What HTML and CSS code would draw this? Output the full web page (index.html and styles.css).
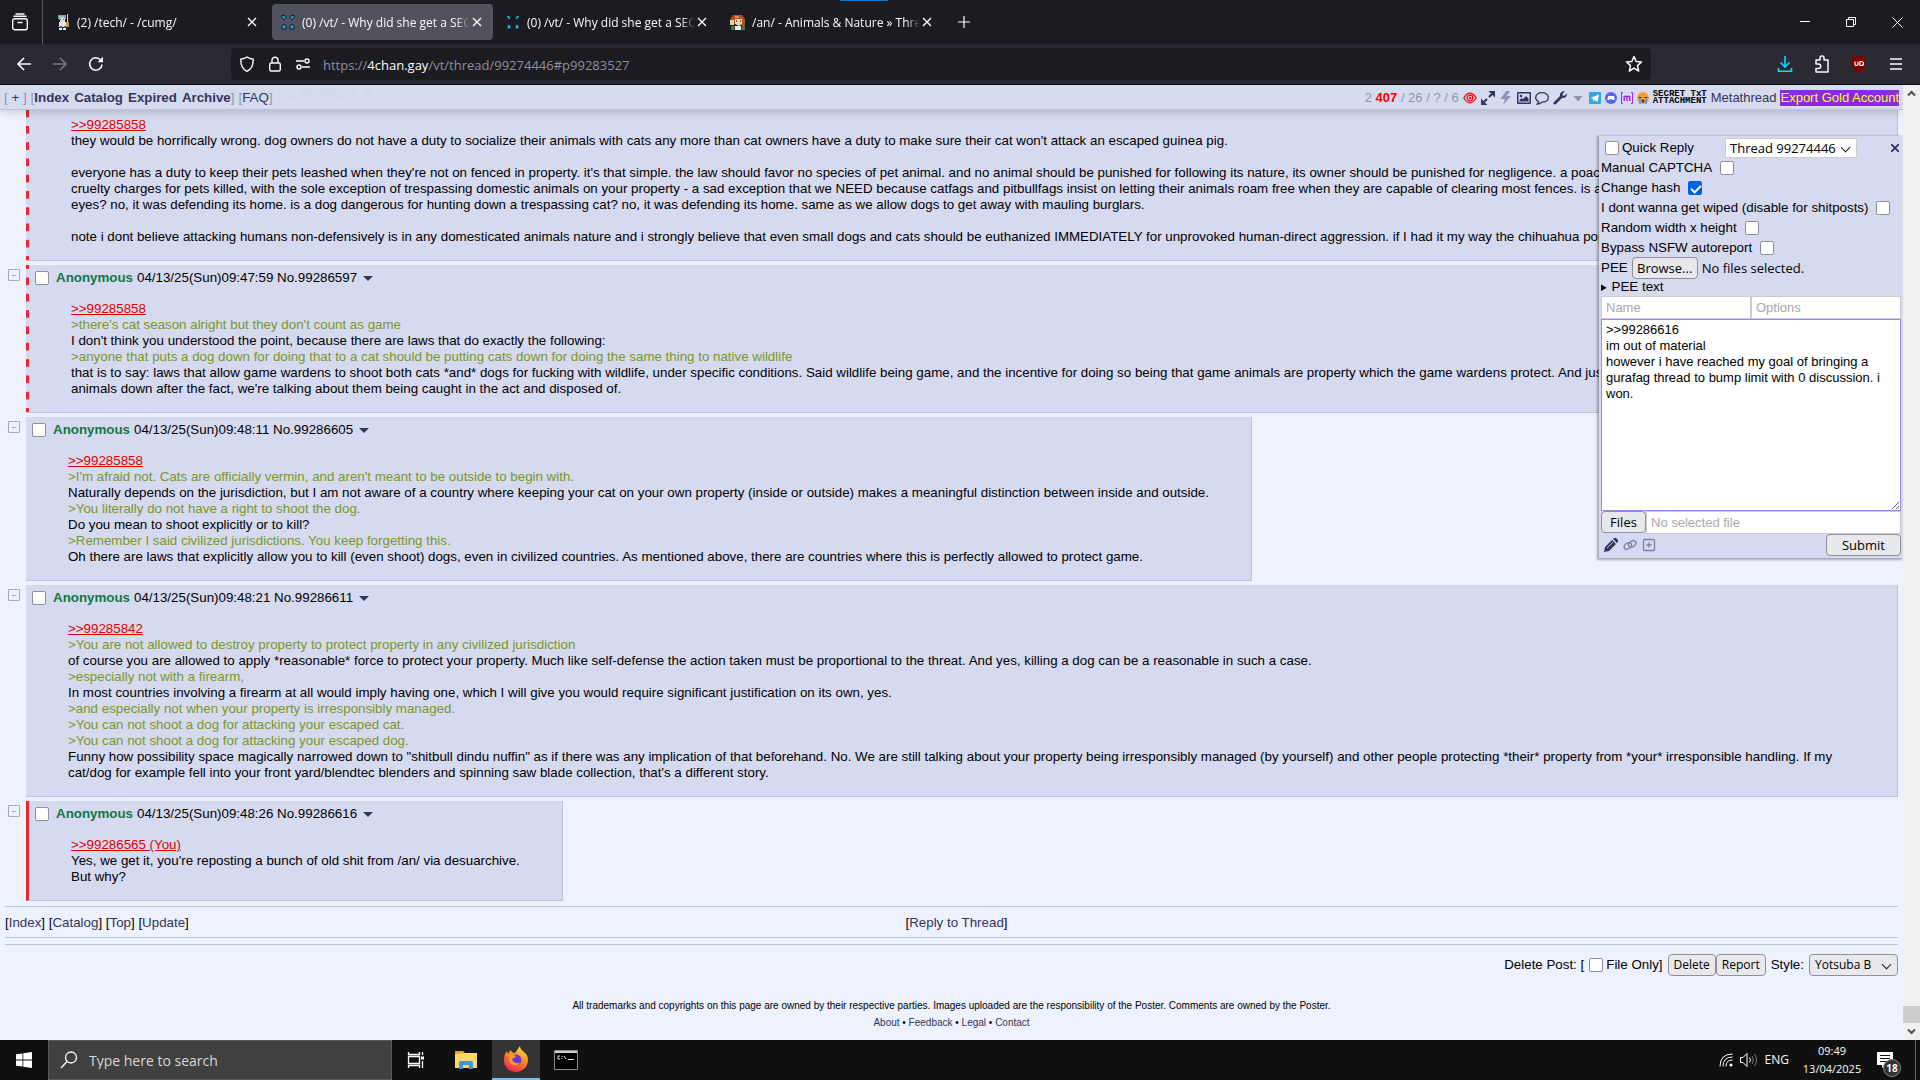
FILE: index.html
```html
<!DOCTYPE html>
<html lang="en">
<head>
    <title>/vt/ - Why did she get a SECOND</title>
    <meta charset="UTF-8">
    <link rel="stylesheet" href="styles.css">
</head>
<body>
<header class="titlebar">
    <button class="tabview" aria-label="Recent browsing">
        <svg width="18" height="18" viewBox="0 0 18 18" fill="none" stroke="#fbfbfe" stroke-width="1.4"><rect x="1.7" y="5.7" width="14.6" height="11" rx="2"/><path d="M2.5 3.2h13M4.5 1h9M6.5 9.5h5"/></svg>
    </button>
    <div class="tabs">
        <div class="tab">
            <svg width="16" height="16" viewBox="0 0 16 16"><path fill="#7f9fa8" d="M3 1h8v4H9v1H4V5H3z"/><path fill="#f2dccb" d="M5 4h5v4H5z"/><path fill="#dfe9ee" d="M4 8h7v5H4z"/><path fill="#9fc0c8" d="M4 2h5v2H4z"/><path fill="#38617e" d="M5 5h1v1H5zM8 5h1v1H8zM5 12h2v2H5zM9 12h2v2H9z"/><path fill="#eee" d="M4 14h3v2H4zM8 14h3v2H8z"/><path fill="#c9974c" d="M11 8h3v5h-3z"/><path fill="#d8d8d8" d="M12 0h1v8h-1z"/></svg>
            <span class="tab_title">(2) /tech/ - /cumg/</span>
            <button class="close" aria-label="Close tab"><svg width="10" height="10" viewBox="0 0 10 10" stroke="#fbfbfe" stroke-width="1.4"><path d="M1 1l8 8M9 1L1 9"/></svg></button>
        </div>
        <div class="tab active">
            <svg width="16" height="16" viewBox="0 0 16 16" fill="#2e9fd0" stroke="#0c1c2a" stroke-width="1"><path d="M1 2l3-1 2 3-2 2zM15 2l-3-1-2 3 2 2zM4 10l2 2v3H2v-3zM12 10l-2 2v3h4v-3z"/></svg>
            <span class="tab_title">(0) /vt/ - Why did she get a SECO</span>
            <button class="close" aria-label="Close tab"><svg width="10" height="10" viewBox="0 0 10 10" stroke="#fbfbfe" stroke-width="1.4"><path d="M1 1l8 8M9 1L1 9"/></svg></button>
        </div>
        <div class="tab">
            <svg width="16" height="16" viewBox="0 0 16 16" fill="#2e9fd0" stroke="#0c1c2a" stroke-width="1"><path d="M1 2l3-1 2 3-2 2zM15 2l-3-1-2 3 2 2zM4 10l2 2v3H2v-3zM12 10l-2 2v3h4v-3z"/></svg>
            <span class="tab_title">(0) /vt/ - Why did she get a SECO</span>
            <button class="close" aria-label="Close tab"><svg width="10" height="10" viewBox="0 0 10 10" stroke="#fbfbfe" stroke-width="1.4"><path d="M1 1l8 8M9 1L1 9"/></svg></button>
        </div>
        <div class="tab">
            <svg width="16" height="16" viewBox="0 0 16 16"><path fill="#b5522b" d="M3 1h9l3 4v6l-2 2-2-3H4l-4 1V6z"/><path fill="#f3d3ae" d="M5 5h7v5l-3 2-4-2z"/><path fill="#f0c9a0" d="M0 6h4v5H0z"/><path fill="#4a7a3c" d="M10 6h1v2h-1zM6 6h1v2H6zM1 12h4l-1 4H1zM12 12h3v4h-4z"/><path fill="#eee" d="M5 12h6v4H5z"/><path fill="#e08a55" d="M5 2h4v2H5z"/></svg>
            <span class="tab_title">/an/ - Animals &amp; Nature » Threa</span>
            <button class="close" aria-label="Close tab"><svg width="10" height="10" viewBox="0 0 10 10" stroke="#fbfbfe" stroke-width="1.4"><path d="M1 1l8 8M9 1L1 9"/></svg></button>
        </div>
        <button class="newtab" aria-label="New tab"><svg width="12" height="12" viewBox="0 0 12 12" stroke="#fbfbfe" stroke-width="1.2"><path d="M6 0v12M0 6h12"/></svg></button>
    </div>
    <div class="winbuttons">
        <button aria-label="Minimize"><svg width="10" height="10" viewBox="0 0 10 10" stroke="#fff"><path d="M0 4.5h10"/></svg></button>
        <button aria-label="Restore"><svg width="10" height="10" viewBox="0 0 10 10" fill="none" stroke="#fff"><path d="M.5 2.5h7v7h-7zM2.5 2.5v-2h7v7h-2"/></svg></button>
        <button aria-label="Close"><svg width="11" height="11" viewBox="0 0 11 11" stroke="#fff"><path d="M.5 .5l10 10M10.5 .5l-10 10"/></svg></button>
    </div>
    <div class="topstrip"></div>
</header>

<nav class="toolbar">
    <button aria-label="Back"><svg width="16" height="16" viewBox="0 0 16 16" fill="none" stroke="#fbfbfe" stroke-width="1.6"><path d="M15 8H2M8 2L2 8l6 6"/></svg></button>
    <button aria-label="Forward"><svg width="16" height="16" viewBox="0 0 16 16" fill="none" stroke="#77767e" stroke-width="1.6"><path d="M1 8h13M8 2l6 6-6 6"/></svg></button>
    <button aria-label="Reload"><svg width="16" height="16" viewBox="0 0 16 16" fill="none" stroke="#fbfbfe" stroke-width="1.6"><path d="M14 8.5A6.2 6.2 0 1 1 12.6 4"/><path d="M9.500 6.200H15V.7z" fill="#fbfbfe" stroke="none"/></svg></button>
    <div class="urlbar">
        <svg width="16" height="16" viewBox="0 0 16 16" fill="none" stroke="#fbfbfe" stroke-width="1.4"><path d="M8 1c2 1.500 4.200 2 6.200 2.200C14.300 9 12 13.500 8 15.300 4 13.500 1.700 9 1.800 3.200 3.800 3 6 2.500 8 1z"/></svg>
        <svg width="16" height="16" viewBox="0 0 16 16" fill="none" stroke="#fbfbfe" stroke-width="1.4"><rect x="2.7" y="7" width="10.6" height="8" rx="1.5"/><path d="M5 7V4.200a3 3 0 0 1 6 0V7"/></svg>
        <svg width="16" height="16" viewBox="0 0 16 16" fill="none" stroke="#fbfbfe" stroke-width="1.4"><path d="M1 5h8M7 11h8"/><circle cx="12" cy="5" r="2"/><circle cx="4" cy="11" r="2"/></svg>
        <span class="url">https://<b>4chan.gay</b>/vt/thread/99274446#p99283527</span>
        <svg width="18" height="18" viewBox="0 0 18 18" fill="none" stroke="#fbfbfe" stroke-width="1.5" stroke-linejoin="round"><path d="M9 1.500l2.200 5 5.300.5-4 3.600 1.200 5.400L9 13.200 4.300 16l1.200-5.400-4-3.600 5.300-.5z"/></svg>
    </div>
    <div class="tools">
        <button aria-label="Downloads"><svg width="16" height="18" viewBox="0 0 16 18" fill="none" stroke="#00ddff" stroke-width="1.6"><path d="M8 1v11M3.500 7.500L8 12l4.500-4.500M1.500 13v3.200h13V13"/></svg></button>
        <button aria-label="Extensions"><svg width="16" height="18" viewBox="0 0 16 18" fill="none" stroke="#fbfbfe" stroke-width="1.5"><path d="M2 8V5h4V3a2 2 0 0 1 4 0v2h4v12H2v-3.500h2.500a2.200 2.200 0 0 0 0-4.500H2z" stroke-linejoin="round"/></svg></button>
        <button aria-label="uBlock Origin"><svg width="16" height="18" viewBox="0 0 16 18"><path fill="#800000" d="M8 0c2 1.500 4.500 2 7 2v7c0 4-3 7-7 9-4-2-7-5-7-9V2c2.500 0 5-.5 7-2z"/><path fill="none" stroke="#fff" stroke-width="1.2" d="M4 6.500v2.700q0 1.300 1.300 1.300T7 9.200V6.500M9 6.500v4h1.500a2 2 0 0 0 0-4z"/></svg></button>
        <button aria-label="Menu"><svg width="14" height="14" viewBox="0 0 14 14" stroke="#fbfbfe" stroke-width="1.5"><path d="M1 2h12M1 7h12M1 12h12"/></svg></button>
    </div>
</nav>

<main class="window">
<div class="page">
    <div class="boardnav">
        <span class="boards">[ <a href="#">+</a> ]</span>
        <span class="boards">[<b><a href="#">Index</a><a href="#">Catalog</a><a href="#">Expired</a><a href="#">Archive</a></b>]</span>
        <span class="boards">[<a href="#">FAQ</a>]</span>
        <div class="shortcuts">
            <span class="stats"><span class="unread">2</span> <b>407</b> / 26 / ? / 6</span>
            <svg width="14" height="14" viewBox="0 0 14 14" fill="none" stroke="#f00" stroke-width="1.2"><path d="M.8 7C3 3.300 5 2.200 7 2.200S11 3.300 13.200 7C11 10.700 9 11.800 7 11.800S3 10.700.8 7z"/><circle cx="7" cy="7" r="2.8"/><circle cx="7" cy="7" r=".6"/></svg>
            <svg width="14" height="14" viewBox="0 0 14 14" fill="#34345c" stroke="#34345c" stroke-width="2"><path d="M8 6l3-3M6 8l-3 3" fill="none"/><path stroke="none" d="M7.500 0H14v6.500zM0 7.500V14h6.500z"/></svg>
            <svg width="14" height="14" viewBox="0 0 14 14" fill="#9191b8"><path d="M7 0L1.500 8H6l-2 6 8-9H7.500L11 0z"/></svg>
            <svg width="14" height="14" viewBox="0 0 14 14" fill="#34345c"><path fill-rule="evenodd" d="M1 1h12q1 0 1 1v10q0 1-1 1H1q-1 0-1-1V2q0-1 1-1zm.5 1.500v9h11v-9z"/><circle cx="4" cy="5" r="1.3"/><path d="M2.500 10.500V9l2-2 1.300 1.200L9 5l2.500 2.500v3z"/></svg>
            <svg width="14" height="14" viewBox="0 0 14 14" fill="none" stroke="#34345c" stroke-width="1.3"><path d="M3.500 10.500C1.500 9.500.7 8 .7 6.500c0-2.800 2.800-4.800 6.300-4.800s6.300 2 6.300 4.800-2.800 4.700-6.300 4.700C5.500 12.300 4 13 2.300 13c.7-.8 1.200-1.600 1.200-2.500z"/></svg>
            <svg width="14" height="14" viewBox="0 0 14 14" fill="#34345c"><path d="M1 11l6-6C6.500 2 8.500 0 12 .3L9.500 2.800l.3 1.700 1.700.3L14 2.200C14.200 5.500 12 7.500 9 7l-6 6q-1.200 1-2.200 0T1 11z"/></svg>
            <svg width="14" height="14" viewBox="0 0 14 14" fill="#89a"><path d="M2.500 5h9L7 10.500z"/></svg>
            <svg width="12" height="14" viewBox="0 0 12 14"><rect y="1" width="12" height="12" rx="1" fill="#2fa8df"/><path fill="#fff" d="M1.500 7L10 3.500 8.500 11 5.500 9 4.500 10.500 4 8z"/></svg>
            <svg width="12" height="14" viewBox="0 0 12 14"><circle cx="6" cy="7" r="6" fill="#5865f2"/><path fill="#fff" d="M3 5h6l.6 4H8l-.6-.8H4.600L4 9H2.400z"/></svg>
            <svg width="12" height="14" viewBox="0 0 12 14" fill="none" stroke="#a020f0"><path d="M2 1.500H.5v11H2M10 1.500h1.500v11H10"/><path stroke-width="1.4" d="M3.200 10V5M3.200 6q1.500-1.500 2.800 0v4M6 6q1.500-1.500 2.800 0v4"/></svg>
            <svg width="12" height="14" viewBox="0 0 12 14"><circle cx="6" cy="7" r="6" fill="#f6a02c"/><path fill="#4aa8e8" d="M2 7h2v6H2zM8 7h2v6H8z"/><path stroke="#5b3300" d="M1.500 6.500h3M7.500 6.500h3"/><ellipse cx="6" cy="10" rx="1.5" ry="1.8" fill="#7a2d10"/></svg>
            <a class="secret" href="#">SECRET TxT<br>ATTACHMENT</a>
            <a class="meta" href="#">Metathread</a>
            <a class="gold" href="#">Export Gold Account</a>
        </div>
    </div>

    <div class="thread">
        <div class="row">
            <button class="hide" aria-label="Hide post"></button>
            <article class="post full quotes_you">
                <div class="info">
                    <input type="checkbox" aria-label="Select post 99286587">
                    <span class="name">Anonymous</span> <span>04/13/25(Sun)09:47:41 No.99286587</span> <span class="caret"></span>
                </div>
                <blockquote>
                    <a class="quotelink" href="#">&gt;&gt;99285858</a><br>
                    they would be horrifically wrong. dog owners do not have a duty to socialize their animals with cats any more than cat owners have a duty to make sure their cat won't attack an escaped guinea pig.<br>
                    <br>
                    everyone has a duty to keep their pets leashed when they're not on fenced in property. it's that simple. the law should favor no species of pet animal. and no animal should be punished for following its nature, its owner should be punished for negligence. a poacher faces<br>
                    cruelty charges for pets killed, with the sole exception of trespassing domestic animals on your property - a sad exception that we NEED because catfags and pitbullfags insist on letting their animals roam free when they are capable of clearing most fences. is a<br>
                    eyes? no, it was defending its home. is a dog dangerous for hunting down a trespassing cat? no, it was defending its home. same as we allow dogs to get away with mauling burglars.<br>
                    <br>
                    note i dont believe attacking humans non-defensively is in any domesticated animals nature and i strongly believe that even small dogs and cats should be euthanized IMMEDIATELY for unprovoked human-direct aggression. if I had it my way the chihuahua population
                </blockquote>
            </article>
        </div>

        <div class="row">
            <button class="hide" aria-label="Hide post"></button>
            <article class="post full quotes_you">
                <div class="info">
                    <input type="checkbox" aria-label="Select post 99286597">
                    <span class="name">Anonymous</span> <span>04/13/25(Sun)09:47:59 No.99286597</span> <span class="caret"></span>
                </div>
                <blockquote>
                    <a class="quotelink" href="#">&gt;&gt;99285858</a><br>
                    <span class="quote">&gt;there's cat season alright but they don't count as game</span><br>
                    I don't think you understood the point, because there are laws that do exactly the following:<br>
                    <span class="quote">&gt;anyone that puts a dog down for doing that to a cat should be putting cats down for doing the same thing to native wildlife</span><br>
                    that is to say: laws that allow game wardens to shoot both cats *and* dogs for fucking with wildlife, under specific conditions. Said wildlife being game, and the incentive for doing so being that game animals are property which the game wardens protect. And just<br>
                    animals down after the fact, we're talking about them being caught in the act and disposed of.
                </blockquote>
            </article>
        </div>

        <div class="row">
            <button class="hide" aria-label="Hide post"></button>
            <article class="post">
                <div class="info">
                    <input type="checkbox" aria-label="Select post 99286605">
                    <span class="name">Anonymous</span> <span>04/13/25(Sun)09:48:11 No.99286605</span> <span class="caret"></span>
                </div>
                <blockquote>
                    <a class="quotelink" href="#">&gt;&gt;99285858</a><br>
                    <span class="quote">&gt;I'm afraid not. Cats are officially vermin, and aren't meant to be outside to begin with.</span><br>
                    Naturally depends on the jurisdiction, but I am not aware of a country where keeping your cat on your own property (inside or outside) makes a meaningful distinction between inside and outside.<br>
                    <span class="quote">&gt;You literally do not have a right to shoot the dog.</span><br>
                    Do you mean to shoot explicitly or to kill?<br>
                    <span class="quote">&gt;Remember I said civilized jurisdictions. You keep forgetting this.</span><br>
                    Oh there are laws that explicitly allow you to kill (even shoot) dogs, even in civilized countries. As mentioned above, there are countries where this is perfectly allowed to protect game.
                </blockquote>
            </article>
        </div>

        <div class="row">
            <button class="hide" aria-label="Hide post"></button>
            <article class="post">
                <div class="info">
                    <input type="checkbox" aria-label="Select post 99286611">
                    <span class="name">Anonymous</span> <span>04/13/25(Sun)09:48:21 No.99286611</span> <span class="caret"></span>
                </div>
                <blockquote>
                    <a class="quotelink" href="#">&gt;&gt;99285842</a><br>
                    <span class="quote">&gt;You are not allowed to destroy property to protect property in any civilized jurisdiction</span><br>
                    of course you are allowed to apply *reasonable* force to protect your property. Much like self-defense the action taken must be proportional to the threat. And yes, killing a dog can be a reasonable in such a case.<br>
                    <span class="quote">&gt;especially not with a firearm,</span><br>
                    In most countries involving a firearm at all would imply having one, which I will give you would require significant justification on its own, yes.<br>
                    <span class="quote">&gt;and especially not when your property is irresponsibly managed.</span><br>
                    <span class="quote">&gt;You can not shoot a dog for attacking your escaped cat.</span><br>
                    <span class="quote">&gt;You can not shoot a dog for attacking your escaped dog.</span><br>
                    Funny how possibility space magically narrowed down to "shitbull dindu nuffin" as if there was any implication of that beforehand. No. We are still talking about your property being irresponsibly managed (by yourself) and other people protecting *their* property from *your* irresponsible handling. If my cat/dog for example fell into your front yard/blendtec blenders and spinning saw blade collection, that's a different story.
                </blockquote>
            </article>
        </div>

        <div class="row">
            <button class="hide" aria-label="Hide post"></button>
            <article class="post own_reply">
                <div class="info">
                    <input type="checkbox" aria-label="Select post 99286616">
                    <span class="name">Anonymous</span> <span>04/13/25(Sun)09:48:26 No.99286616</span> <span class="caret"></span>
                </div>
                <blockquote>
                    <a class="quotelink" href="#">&gt;&gt;99286565 (You)</a><br>
                    Yes, we get it, you're reposting a bunch of old shit from /an/ via desuarchive.<br>
                    But why?
                </blockquote>
            </article>
        </div>
    </div>

    <div class="bottomnav">
        <div>[<a href="#">Index</a>] [<a href="#">Catalog</a>] [<a href="#">Top</a>] [<a href="#">Update</a>]</div>
        <div class="openqr">[<a href="#">Reply to Thread</a>]</div>
        <div></div>
    </div>
    <hr>

    <form class="deleteform">
        <span>Delete Post: [</span>
        <label><input type="checkbox">File Only]</label>
        <span class="pair"><button type="button">Delete</button><button type="button">Report</button></span>
        <label for="style">Style:</label>
        <span class="select"><select id="style"><option>Yotsuba B</option></select></span>
    </form>

    <footer>
        <p>All trademarks and copyrights on this page are owned by their respective parties. Images uploaded are the responsibility of the Poster. Comments are owned by the Poster.</p>
        <p><a href="#">About</a> • <a href="#">Feedback</a> • <a href="#">Legal</a> • <a href="#">Contact</a></p>
    </footer>

    <form class="qr">
        <div class="qr_head">
            <label><input type="checkbox">Quick Reply</label>
            <span class="select"><select aria-label="Thread"><option>Thread 99274446</option></select></span>
            <button type="button" class="qr_close" aria-label="Close"><svg width="8" height="8" viewBox="0 0 8 8" stroke="#34345c" stroke-width="1.8"><path d="M0 0l8 8M8 0L0 8"/></svg></button>
        </div>
        <label class="opt">Manual CAPTCHA <input type="checkbox"></label>
        <label class="opt">Change hash <input type="checkbox" checked></label>
        <label class="opt">I dont wanna get wiped (disable for shitposts) <input type="checkbox"></label>
        <label class="opt">Random width x height <input type="checkbox"></label>
        <label class="opt">Bypass NSFW autoreport <input type="checkbox"></label>
        <div class="pee"><span>PEE</span><button type="button">Browse...</button><span class="ui">No files selected.</span></div>
        <details><summary>PEE text</summary></details>
        <div class="fields">
            <input type="text" placeholder="Name" aria-label="Name">
            <input type="text" placeholder="Options" aria-label="Options">
        </div>
        <textarea aria-label="Comment" spellcheck="false">&gt;&gt;99286616
im out of material
however i have reached my goal of bringing a gurafag thread to bump limit with 0 discussion. i won.</textarea>
        <div class="files">
            <button type="button">Files</button>
            <input type="text" placeholder="No selected file" aria-label="File">
        </div>
        <div class="qr_foot">
            <svg width="14" height="14" viewBox="0 0 14 14" fill="#34345c"><path d="M0 14l1-5 7-7 4 4-7 7zM9 1l1-1h2l2 2v2l-1 1z"/><path stroke="#d6daf0" stroke-width=".8" d="M3 10l6-6"/></svg>
            <svg width="14" height="14" viewBox="0 0 14 14" fill="none" stroke="#7c7ca8" stroke-width="1.3"><ellipse cx="4.8" cy="8" rx="4" ry="2.8" transform="rotate(-35 4.8 8)"/><ellipse cx="9.2" cy="6" rx="4" ry="2.8" transform="rotate(-35 9.2 6)"/></svg>
            <svg width="14" height="14" viewBox="0 0 14 14" fill="none" stroke="#7c7ca8" stroke-width="1.3"><rect x="1.5" y="1.5" width="11" height="11" rx="1"/><path d="M7 4.500v5M4.500 7h5"/></svg>
            <button type="button" class="submit">Submit</button>
        </div>
    </form>
</div>
<div class="scrollbar">
    <svg width="17" height="17" viewBox="0 0 17 17" fill="none" stroke="#505050" stroke-width="2"><path d="M5 10.500L8.500 7l3.500 3.500"/></svg>
    <div class="thumb"></div>
    <svg width="17" height="17" viewBox="0 0 17 17" fill="none" stroke="#505050" stroke-width="2"><path d="M5 6.500L8.500 10 12 6.500"/></svg>
</div>
</main>

<footer class="taskbar">
    <button class="task" aria-label="Start"><svg width="16" height="16" viewBox="0 0 16 16" fill="#fff"><path d="M0 2.300L6.500 1.400v6.200H0zM7.300 1.300L16 0v7.600H7.300zM0 8.400h6.500v6.200L0 13.700zM7.300 8.400H16V16l-8.700-1.300z"/></svg></button>
    <label class="search">
        <svg width="18" height="18" viewBox="0 0 18 18" fill="none" stroke="#fff" stroke-width="1.3"><circle cx="11" cy="6.5" r="5.5"/><path d="M7 10.500L1 17"/></svg>
        <input type="text" placeholder="Type here to search" aria-label="Search">
    </label>
    <button class="task" aria-label="Task view"><svg width="18" height="18" viewBox="0 0 18 18" fill="none" stroke="#fff" stroke-width="1.3"><path d="M1.500 1v2.500h11V1M1.500 17v-2.500h11V17M1.500 5.500h11v7h-11zM15.500 1v3M15.500 10v7"/><path d="M14 5.500h3v3h-3z" fill="#fff" stroke="none"/></svg></button>
    <button class="task" aria-label="File Explorer"><svg width="24" height="20" viewBox="0 0 24 20"><path fill="#e8a317" d="M1 1h8l2 2v4H1z"/><path fill="#ffd767" d="M1 4l10-1h12v15H1z"/><path fill="#3a96dd" d="M5 19v-6q0-2 2-2h10q2 0 2 2v6h-4v-4H9v4z"/></svg></button>
    <button class="task running" aria-label="Firefox"><svg width="26" height="26" viewBox="0 0 26 26"><defs><linearGradient id="fx" x1=".8" y1="0" x2=".3" y2="1"><stop offset="0" stop-color="#ffe84a"/><stop offset=".45" stop-color="#ff8a1f"/><stop offset="1" stop-color="#f0244f"/></linearGradient></defs><path fill="url(#fx)" d="M17 0c0 3 2 4 4 6 4 3 5 8 3 13-2 4-6 7-11 7C6 26 1 21 1 14c0-4 1-7 3-9l1 3c1-2 2-3 3-4 0 2 2 3 4 3 2-2 3-5 5-7z"/><circle cx="13" cy="14" r="5.5" fill="#6a3ad0"/><path fill="#ff9a2a" d="M6 9c3-1 5 0 7 1-1 2-3 2-4 3 1 4 4 5 8 4-3 4-10 3-11-3z"/></svg></button>
    <button class="task" aria-label="Command Prompt"><svg width="24" height="20" viewBox="0 0 24 20"><path fill="#000" stroke="#8a8a8a" d="M.5.500h23v19H.5z"/><path fill="#cfcfcf" d="M1 1h22v2H1z"/><path stroke="#ddd" fill="none" d="M6 6H4v3h2M8 6v1M8 8v1M10 6l2 3M14 9.500h6"/></svg></button>
    <div class="tray">
        <svg width="14" height="14" viewBox="0 0 14 14" fill="none" stroke="#fff"><path d="M1 13.500Q1 1 13.500 1M4 13.500Q4 4 13.500 4M7 13.500Q7 7 13.500 7"/><circle cx="12" cy="12" r="1.5" fill="#fff" stroke="none"/></svg>
        <svg width="18" height="14" viewBox="0 0 18 14" fill="none" stroke="#fff"><path d="M.5 4.500H3l4-4v13l-4-4H.5zM9.500 4.500q2 2.500 0 5"/><path stroke="#777" d="M12 3q3 4 0 8M14.500 1q4 6 0 12"/></svg>
        <span class="lang">ENG</span>
        <div class="clock">09:49<br>13/04/2025</div>
        <div class="notify">
            <svg width="16" height="16" viewBox="0 0 16 16"><path fill="#fff" d="M0 0h16v13H8l-3 3v-3H0z"/><path stroke="#111" d="M3 3.500h10M3 6.500h10M3 9.500h7"/></svg>
            <span class="badge">18</span>
        </div>
    </div>
</footer>
</body>
</html>
```

FILE: styles.css
```css
* {
    box-sizing: border-box;
}
body {
    margin: 0;
    height: 100vh;
    display: flex;
    flex-direction: column;
    overflow: hidden;
    background: #eef2ff;
    font-family: "Liberation Sans", Arial, sans-serif;
    font-size: 10pt;
    line-height: 16px;
    color: #000;
}
button, input, select, textarea {
    font: inherit;
    color: inherit;
    margin: 0;
}
button {
    padding: 0;
}
svg {
    display: block;
    flex: none;
}
a {
    color: #34345c;
    text-decoration: none;
}

/* browser window */
.titlebar, .toolbar, .taskbar {
    flex: none;
    display: flex;
    align-items: center;
    font-family: "Open Sans", "Noto Sans", sans-serif;
    color: #fbfbfe;
}
.titlebar button, .toolbar button, .task {
    display: flex;
    align-items: center;
    justify-content: center;
    flex: none;
    border: 0;
    background: none;
}
.titlebar {
    position: relative;
    height: 44px;
    background: #1c1b22;
    font-size: 12px;
}
.topstrip {
    position: absolute;
    top: 0;
    left: 840px;
    width: 48px;
    height: 1px;
    background: #0078d7;
}
.titlebar .tabview {
    width: 43px;
    height: 44px;
    padding-right: 3px;
    border-right: 1px solid #5b5a63;
}
.tabs {
    display: flex;
    flex: 1;
    align-items: center;
    gap: 4px;
    padding-left: 4px;
}
.tab {
    display: flex;
    align-items: center;
    width: 221px;
    height: 36px;
    padding: 0 11px 0 8px;
    border-radius: 4px;
}
.tab.active {
    background: #52525e;
}
.tab_title {
    flex: 1;
    margin-left: 6px;
    padding-top: 2px;
    overflow: hidden;
    white-space: nowrap;
    -webkit-mask-image: linear-gradient(to left, transparent, #000 14px);
    mask-image: linear-gradient(to left, transparent, #000 14px);
}
.close {
    margin-left: 2px;
}
.titlebar .newtab {
    width: 28px;
    height: 28px;
    margin-left: 3px;
}
.winbuttons {
    display: flex;
}
.winbuttons button {
    width: 46px;
    height: 44px;
}

.toolbar {
    height: 41px;
    padding: 0 6px;
    background: #2b2a33;
    border-bottom: 1px solid #0c0c0d;
    font-size: 13px;
}
.toolbar button {
    width: 36px;
    height: 32px;
}
.urlbar {
    display: flex;
    align-items: center;
    flex: 1;
    height: 32px;
    margin-left: 117px;
    padding: 0 8px;
    gap: 12px;
    border-radius: 4px;
    background: #1c1b22;
}
.url {
    flex: 1;
    padding-top: 2px;
    color: #8f8f9d;
}
.url b {
    font-weight: normal;
    color: #fbfbfe;
}
.tools {
    display: flex;
    gap: 1px;
    margin-left: 116px;
}

.window {
    display: flex;
    flex: 1;
    min-height: 0;
}
.page {
    position: relative;
    flex: 1;
    min-width: 0;
    overflow: hidden;
    background: #eef2ff;
}
.scrollbar {
    display: flex;
    flex-direction: column;
    width: 17px;
    background: #f0f0f0;
}
.thumb {
    height: 17px;
    margin-top: auto;
    background: #cdcdcd;
}

/* board header */
.boardnav {
    position: absolute;
    z-index: 1;
    top: 0;
    left: 0;
    right: 0;
    display: flex;
    align-items: center;
    gap: 4px;
    height: 25px;
    padding: 1px 4px 0;
    background: rgba(214, 218, 240, .98);
    border-bottom: 1px solid #b7c5d9;
    box-shadow: 0 1px 10px rgba(0, 0, 0, .2);
    color: #89a;
}
.boards b {
    display: inline-flex;
    gap: 5px;
}
.shortcuts {
    display: flex;
    align-items: center;
    gap: 4px;
    margin-left: auto;
    font-size: 13px;
}
.stats {
    white-space: nowrap;
}
.stats b {
    color: #f00;
}
.secret {
    color: #000;
    font: bold 9px/7px "Liberation Mono", monospace;
}
.gold {
    background: #8a2be2;
    color: #ff0;
}

/* posts */
.thread {
    display: flex;
    flex-direction: column;
    gap: 4px;
    margin: -4px 5px 5px;
}
.row {
    display: flex;
    align-items: flex-start;
    gap: 6px;
    padding-left: 3px;
}
.hide {
    flex: none;
    width: 12px;
    height: 12px;
    margin-top: 4px;
    border: 1px solid #a6a8c8;
    border-radius: 1px;
    background: linear-gradient(#a6a8c8, #a6a8c8) center / 4px 1px no-repeat;
}
.post {
    padding: 6px 2px 15px 6px;
    background: #d6daf0;
    border: 1px solid #b7c5d9;
    border-top: 0;
    border-left: 0;
}
.full {
    flex: 1;
}
.quotes_you {
    padding-left: 9px;
    background: linear-gradient(#e22a30 25%, transparent 25% 75%, #e22a30 75%) 0 0 / 3px 17px no-repeat #d6daf0;
    background-repeat: no-repeat round;
}
.own_reply {
    border-left: 3px solid #e22a30;
}
.info {
    display: flex;
    align-items: center;
    gap: 4px;
    height: 14px;
}
.info input {
    margin-right: 3px;
}
.name {
    font-weight: bold;
    color: #117743;
}
.caret {
    margin-left: 2px;
    border: 5px solid transparent;
    border-top-color: #34345c;
    border-bottom: 0;
}
blockquote {
    margin: 16px 40px 0 36px;
}
.quotelink {
    color: #d00;
    text-decoration: underline;
}
.quote {
    color: #789922;
}
input[type=checkbox] {
    position: relative;
    appearance: none;
    flex: none;
    width: 14px;
    height: 14px;
    border: 1px solid #8f8f9d;
    border-radius: 2px;
    background: #fff;
}
input[type=checkbox]:checked {
    border-color: #0061e0;
    background: #0061e0;
}
input[type=checkbox]:checked::after {
    content: "";
    position: absolute;
    left: 4px;
    top: 1px;
    width: 4px;
    height: 8px;
    border: solid #fff;
    border-width: 0 2px 2px 0;
    transform: rotate(45deg);
}

/* below the thread */
hr {
    margin: 0 5px;
    border: 0;
    border-top: 1px solid #b7c5d9;
}
.bottomnav {
    display: grid;
    grid-template-columns: 1fr auto 1fr;
    margin: 0 5px 6px;
    padding: 8px 0 6px;
    border: solid #b7c5d9;
    border-width: 1px 0;
}
.openqr {
    padding-left: 10px;
}
.deleteform {
    display: flex;
    align-items: center;
    justify-content: flex-end;
    gap: 5px;
    margin: 9px 5px 0;
}
.deleteform label {
    display: flex;
    align-items: center;
    gap: 3px;
}
.deleteform button, .qr button:not(.qr_close), .select select {
    height: 22px;
    border: 1px solid #8f8f9d;
    border-radius: 4px;
    background: #e9e9ed;
    font-family: "Open Sans", "Noto Sans", sans-serif;
    font-size: 12px;
}
.pair {
    display: flex;
}
.pair button {
    padding: 0 5px;
}
.select {
    position: relative;
}
.select select {
    appearance: none;
    display: block;
    padding: 0 25px 0 5px;
}
.select::after {
    content: "";
    position: absolute;
    right: 8px;
    top: calc(50% - 4px);
    width: 6px;
    height: 6px;
    border: solid #222;
    border-width: 0 1px 1px 0;
    transform: rotate(45deg);
    pointer-events: none;
}
.page footer {
    margin-top: 21px;
    font-size: 10px;
    line-height: 17px;
    text-align: center;
}
.page footer p {
    margin: 0;
}

/* quick reply window */
.qr {
    position: absolute;
    top: 51px;
    right: 1px;
    width: 303px;
    padding: 1px 1px 2px 2px;
    background: #d6daf0;
    box-shadow: -1px 1px 2px 1px rgba(0, 0, 0, .3);
}
.qr_head {
    display: flex;
    align-items: center;
    height: 21px;
}
.qr_head label {
    display: flex;
    align-items: center;
    gap: 3px;
    width: 124px;
    padding-left: 4px;
}
.qr .select select {
    width: 132px;
    height: 20px;
    padding: 0 20px 0 4px;
    border-color: #ccc;
    border-radius: 0;
    background: #fff;
}
.qr .select select, .qr button:not(.qr_close), .ui {
    font-family: "Open Sans", "Noto Sans", sans-serif;
    font-size: 13px;
}
.qr_close {
    margin: 0 2px 0 auto;
    border: 0;
    background: none;
}
.opt {
    display: flex;
    align-items: center;
    gap: 8px;
    height: 20px;
}
.pee {
    display: flex;
    align-items: center;
    gap: 4px;
    height: 20px;
}
.pee button {
    width: 66px;
}
summary {
    height: 18px;
    line-height: 18px;
}
summary::marker {
    font-size: 10px;
}
.fields, .files {
    display: flex;
}
.qr input[type=text] {
    flex: 1;
    min-width: 0;
    height: 23px;
    padding: 0 4px;
    border: 1px solid #ccc;
    background: #fff;
    font-size: 13px;
}
::placeholder {
    color: #a9a9a9;
    opacity: 1;
}
.qr textarea {
    display: block;
    width: 100%;
    height: 192px;
    padding: 2px 4px;
    border: 1px solid #9988ee;
    outline: 0;
    background: #fff;
    font-size: 13px;
    resize: both;
}
.files button {
    width: 45px;
}
.qr_foot {
    display: flex;
    align-items: center;
    gap: 5px;
    padding-left: 3px;
}
.qr button.submit {
    width: 75px;
    margin-left: auto;
}

/* taskbar */
.taskbar {
    height: 40px;
    background: #101010;
    font-size: 12px;
}
.task {
    width: 48px;
    height: 40px;
}
.task + .task {
    margin-left: 2px;
}
.search {
    display: flex;
    align-items: center;
    width: 344px;
    height: 40px;
    padding-left: 11px;
    gap: 11px;
    border: 1px solid #5a5a5a;
    background: #404040;
}
.search input {
    flex: 1;
    padding: 2px 0 0;
    border: 0;
    background: none;
    font-size: 14px;
}
.search ::placeholder {
    color: #d8d8d8;
}
.task.running {
    background: #333;
    border-bottom: 2px solid #76b9ed;
}
.tray {
    display: flex;
    align-items: center;
    gap: 7px;
    height: 40px;
    margin: 0 4px 0 auto;
    padding-right: 12px;
    border-right: 1px solid #666;
}
.clock {
    width: 72px;
    line-height: 18px;
    font-size: 11px;
    text-align: center;
}
.notify {
    position: relative;
    width: 26px;
    margin-left: 2px;
}
.badge {
    position: absolute;
    left: 6px;
    top: 7px;
    width: 18px;
    height: 18px;
    border: 1px solid #888;
    border-radius: 9px;
    background: #333;
    font-size: 10px;
    font-weight: bold;
    text-align: center;
}
```
